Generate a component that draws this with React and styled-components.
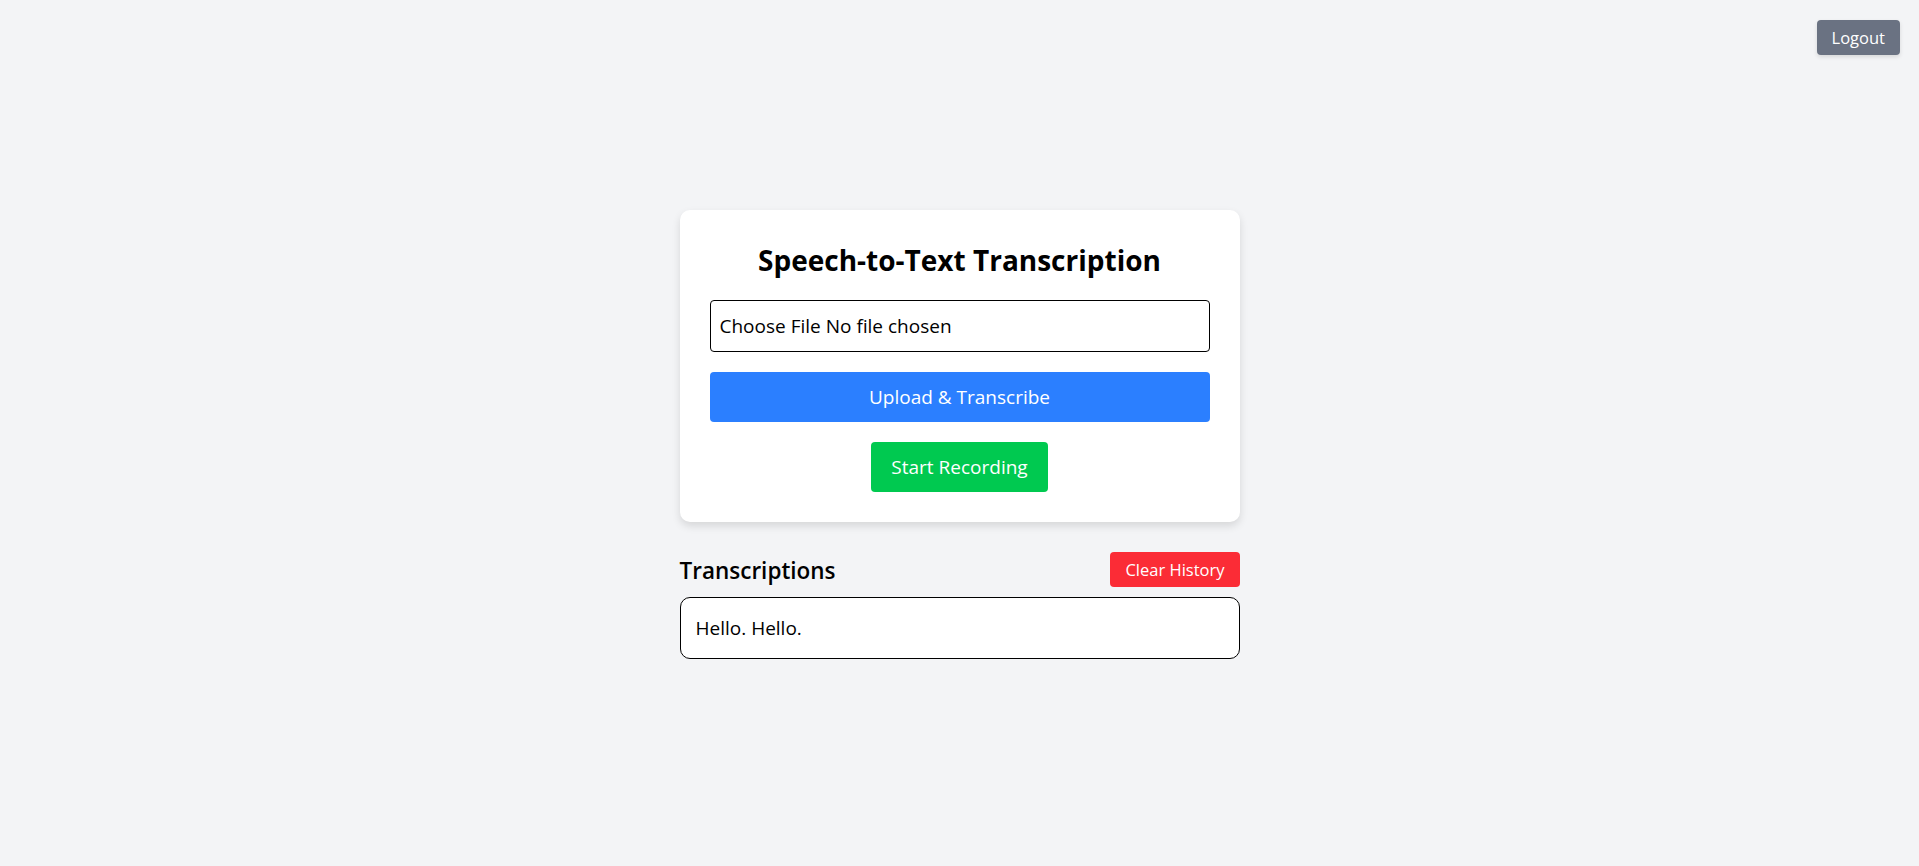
import React from 'react';
import styled, { createGlobalStyle } from 'styled-components';

const GlobalStyle = createGlobalStyle`
  * {
    box-sizing: border-box;
  }

  body {
    margin: 0;
    background-color: #f3f4f6;
    font-family: 'Open Sans', 'Noto Sans', sans-serif;
    color: #000;
  }
`;

const Page = styled.div`
  position: relative;
  min-height: 100vh;
  padding-top: 3px;
  display: flex;
  flex-direction: column;
  align-items: center;
  justify-content: center;
`;

const LogoutButton = styled.button`
  position: absolute;
  top: 20px;
  right: 19px;
  padding: 6px 15px;
  border: none;
  border-radius: 4px;
  font-family: inherit;
  font-size: 16.5px;
  line-height: 23px;
  color: #fff;
  background-color: #6a7282;
  box-shadow: 0 2px 4px rgba(0, 0, 0, 0.12);
`;

const Card = styled.div`
  width: 560px;
  padding: 30px;
  display: flex;
  flex-direction: column;
  align-items: center;
  gap: 20px;
  border-radius: 10px;
  background-color: #fff;
  box-shadow: 0 4px 8px rgba(0, 0, 0, 0.12);
`;

const Title = styled.h1`
  margin: 0;
  font-size: 28px;
  font-weight: 700;
  line-height: 40px;
`;

const FileField = styled.label`
  width: 100%;
  display: flex;
  gap: 5px;
  padding: 12px 9px;
  border: 1px solid #000;
  border-radius: 4px;
  font-size: 19px;
  line-height: 26px;
`;

const ActionButton = styled.button`
  width: ${({ full }) => (full ? '100%' : 'auto')};
  padding: 12px 20px;
  border: none;
  border-radius: 4px;
  font-family: inherit;
  font-size: 19px;
  line-height: 26px;
  color: #fff;
  background-color: ${({ color }) => color};
`;

const Section = styled.div`
  width: 560px;
  margin-top: 30px;
  display: flex;
  flex-direction: column;
  gap: 10px;
`;

const SectionHeader = styled.div`
  display: flex;
  justify-content: space-between;
  align-items: center;
`;

const SectionTitle = styled.h2`
  margin: 0;
  padding-top: 3px;
  font-size: 22.5px;
  font-weight: 600;
  line-height: 30px;
`;

const SmallButton = styled.button`
  padding: 6px 15px;
  border: none;
  border-radius: 4px;
  font-family: inherit;
  font-size: 16.5px;
  line-height: 23px;
  color: #fff;
  background-color: ${({ color }) => color};
`;

const Entry = styled.div`
  padding: 16px 15px;
  border: 1px solid #000;
  border-radius: 10px;
  background-color: #fff;
  font-size: 19px;
  line-height: 28px;
`;

const transcriptions = ['Hello. Hello.'];

export default function App() {
  return (
    <>
      <GlobalStyle />
      <Page>
        <LogoutButton>Logout</LogoutButton>
        <Card>
          <Title>Speech-to-Text Transcription</Title>
          <FileField>
            <span>Choose File</span>
            <span>No file chosen</span>
          </FileField>
          <ActionButton full color="#2b7fff">Upload &amp; Transcribe</ActionButton>
          <ActionButton color="#00c950">Start Recording</ActionButton>
        </Card>
        <Section>
          <SectionHeader>
            <SectionTitle>Transcriptions</SectionTitle>
            <SmallButton color="#fb2c36">Clear History</SmallButton>
          </SectionHeader>
          {transcriptions.map((text, i) => (
            <Entry key={i}>{text}</Entry>
          ))}
        </Section>
      </Page>
    </>
  );
}
